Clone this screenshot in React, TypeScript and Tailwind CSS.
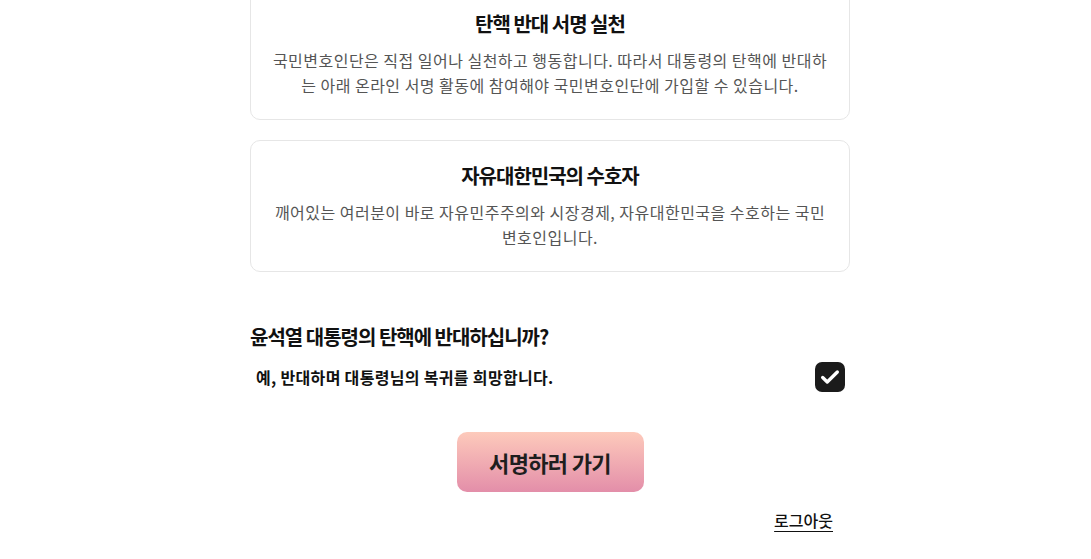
import React, { useState } from 'react';

const cards = [
  {
    title: '탄핵 반대 서명 실천',
    body: '국민변호인단은 직접 일어나 실천하고 행동합니다. 따라서 대통령의 탄핵에 반대하는 아래 온라인 서명 활동에 참여해야 국민변호인단에 가입할 수 있습니다.',
  },
  {
    title: '자유대한민국의 수호자',
    body: '깨어있는 여러분이 바로 자유민주주의와 시장경제, 자유대한민국을 수호하는 국민 변호인입니다.',
  },
];

const App: React.FC = () => {
  const [agreed, setAgreed] = useState(true);

  return (
    <div className="min-h-screen bg-white pl-[9px] font-['Noto_Sans_CJK_KR',sans-serif] text-[#111]">
      <div className="mx-auto w-[600px] -mt-[12px]">
        <div className="flex flex-col gap-5">
          {cards.map((card) => (
            <div key={card.title} className="rounded-[10px] border border-[#e6e6e6] px-5 pt-[19px] pb-[21px] text-center">
              <h3 className="text-xl leading-8 font-bold tracking-[-0.05em]">{card.title}</h3>
              <p className="mt-2 text-base leading-[25px] text-[#555] tracking-[0.03em]">{card.body}</p>
            </div>
          ))}
        </div>

        <div className="mt-[49px]">
          <h4 className="text-xl leading-8 font-bold tracking-[-0.05em]">윤석열 대통령의 탄핵에 반대하십니까?</h4>
          <label className="mt-[9px] flex items-center justify-between pl-1.5 pr-[5px] cursor-pointer">
            <span className="text-base font-semibold tracking-[0.02em]">예, 반대하며 대통령님의 복귀를 희망합니다.</span>
            <button
              type="button"
              onClick={() => setAgreed(!agreed)}
              className={`flex h-[30px] w-[30px] items-center justify-center rounded-[7px] ${agreed ? 'bg-[#1b1b1b]' : 'border-2 border-[#1b1b1b] bg-white'}`}
            >
              {agreed && (
                <svg width="22" height="22" viewBox="0 0 24 24" fill="none" stroke="white" strokeWidth="3.6" strokeLinecap="round" strokeLinejoin="round">
                  <path d="M4 12.5l5 5L20 6.5" />
                </svg>
              )}
            </button>
          </label>
        </div>

        <div className="mt-10 flex justify-center">
          <button className="h-[60px] w-[187px] rounded-[10px] bg-gradient-to-b from-[#fdcabb] to-[#e38ea9] text-[22px] font-bold tracking-[-0.03em] text-[#1e1e1e]">
            서명하러 가기
          </button>
        </div>

        <div className="mt-4 flex justify-end pr-[17px]">
          <button className="text-base font-medium underline underline-offset-4">로그아웃</button>
        </div>
      </div>
    </div>
  );
};

export default App;
